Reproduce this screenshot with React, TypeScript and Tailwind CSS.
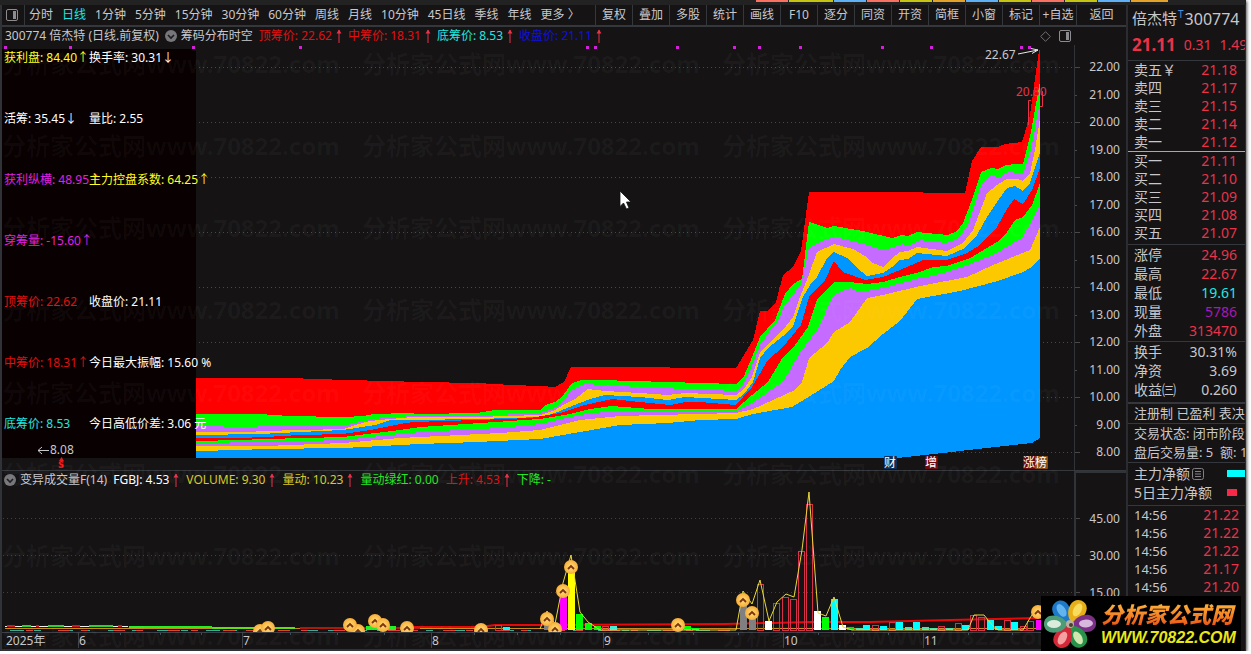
import { Fragment } from 'react';

const PERIODS = ['分时', '日线', '1分钟', '5分钟', '15分钟', '30分钟', '60分钟', '周线', '月线', '10分钟', '45日线', '季线', '年线', '更多 〉'];
const TOOLS = ['复权', '叠加', '多股', '统计', '画线', 'F10', '逐分', '同资', '开资', '简框', '小窗', '标记', '+自选'];

const TABS = [
  'w-[33px] bg-[#f87163]', 'w-[45px] bg-[#c6c412]', 'w-[33px] bg-[#5fb0f5]', 'w-[33px] bg-[#f87163]',
  'w-[33px] bg-[#c6c412]', 'w-[33px] bg-[#e3a32a]', 'w-[33px] bg-[#5fb0f5]', 'w-[33px] bg-[#c6c412]',
  'w-[33px] bg-[#f87163]', 'w-[33px] bg-[#c6c412]', 'w-[33px] bg-[#5fb0f5]', 'w-[38px] bg-[#e3a32a]',
];

const BASE = '1040,438 1032,443 960,451 897,458 196,458';

// upper edge of every cost band, painted from the top one down
const BANDS = [
  { color: '#ff0000', top: '196,378 289,378 346,380 387,381 420,382 477,383 511,385 540,386 555,387 564,382 571,367 650,367 690,368 736,368 753,340 760,311 767,311 776,302 783,275 793,267 801,251 809,192 880,192 965,193 972,161 981,147 998,147 1005,144 1022,142 1030,115 1039,50 1040,50' },
  { color: '#00ff00', top: '196,414 260,414 289,416 343,417 364,416 373,414 408,413 420,414 477,413 495,410 540,410 545,405 555,402 562,397 572,383 582,380 600,380 736,384 743,378 750,362 760,337 775,320 785,294 793,284 802,279 809,222 827,228 834,226 863,231 892,238 902,235 908,236 917,232 948,235 957,231 963,223 973,197 981,172 991,168 998,169 1006,165 1015,164 1023,164 1031,132 1040,81' },
  { color: '#c56bff', top: '196,426 250,427 267,426 343,426 373,419 413,416 477,416 540,413 555,408 563,401 572,390 585,384 600,385 660,388 736,391 743,385 750,370 760,345 767,335 777,322 785,305 793,295 801,284 804,270 809,248 825,240 835,237 860,243 883,250 892,248 902,244 910,246 920,240 945,243 958,239 968,225 976,200 983,182 991,176 1000,177 1008,172 1020,173 1023,174 1031,150 1040,101' },
  { color: '#fcc800', top: '196,432 250,432 262,431 343,429 355,425 370,421 390,419 413,417 477,417 540,415 553,411 565,404 575,399 588,389 605,391 640,393 668,395 685,393 736,395 744,389 752,377 760,352 783,330 793,317 800,297 808,277 817,252 834,244 853,249 865,256 873,263 883,267 892,258 900,252 908,251 917,247 947,251 963,243 973,230 987,193 997,185 1007,179 1017,179 1023,181 1030,173 1035,150 1040,118' },
  { color: '#0096ff', top: '196,435 260,434 300,432 343,430 375,425 390,420 420,420 520,418 545,416 555,413 572,406 590,399 605,395 640,397 668,400 685,397 736,400 744,394 753,382 760,358 768,348 783,336 793,326 803,297 810,285 817,277 827,258 834,252 847,258 857,268 867,276 883,273 892,267 900,260 908,259 917,253 947,256 965,248 977,235 987,217 997,202 1007,188 1015,186 1023,191 1030,183 1036,165 1040,152' },
  { color: '#ff0000', top: '196,438 240,438 265,437 300,435 343,434 370,430 400,424 413,422 477,420 530,418 560,413 585,405 612,399 640,402 670,405 685,402 700,402 736,405 743,397 752,387 762,370 768,360 783,347 801,325 809,297 825,280 834,261 843,272 865,280 883,277 900,270 923,260 947,260 967,253 977,247 997,227 1007,209 1014,199 1023,204 1032,190 1040,168' },
  { color: '#00ff00', top: '196,441 240,440 265,439 343,437 400,430 420,427 480,423 540,419 570,414 590,409 612,406 650,409 736,409 752,395 768,382 783,357 793,348 808,327 817,300 834,282 850,282 867,284 883,282 900,277 920,272 933,267 947,266 970,258 997,242 1007,232 1015,220 1023,217 1032,205 1040,183' },
  { color: '#c56bff', top: '196,443 265,442 343,440 400,434 420,432 500,428 540,424 580,415 612,411 736,411 752,403 783,382 800,353 817,330 834,295 850,288 860,292 883,288 920,278 933,276 960,268 993,255 1007,247 1023,237 1032,220 1040,204' },
  { color: '#fcc800', top: '196,446 265,446 343,443 400,438 420,437 500,433 540,430 580,420 620,416 736,413 753,409 795,390 802,382 809,358 827,343 834,332 850,322 867,298 883,295 920,286 967,277 993,265 1030,250 1040,227' },
  { color: '#0096ff', top: '196,451 240,450 265,449 343,448 420,444 477,442 540,439 580,432 620,425 668,423 700,420 736,419 753,414 792,407 810,396 834,381 840,370 850,357 867,348 883,334 900,321 917,299 960,291 998,281 1023,272 1030,268 1040,258' },
];

const PRICE_AXIS = ['22.00', '21.00', '20.00', '19.00', '18.00', '17.00', '16.00', '15.00', '14.00', '13.00', '12.00', '11.00', '10.00', '9.00', '8.00'];
const SIGNALS = [5, 70, 193, 300, 587, 595, 677, 734, 759, 800, 882, 931, 1021, 1029];

// x, top, fill ("" = hollow red candle)
const VOLUMES: [number, number, string][] = [
  [495, 625, ''], [503, 627, '#00ffff'], [544, 622, '#808080'], [560, 596, '#ff00ff'], [568, 572, '#ffff00'],
  [576, 614, '#00ff00'], [585, 623, '#00ff00'], [594, 626, '#00ff00'], [602, 626, ''], [610, 626, '#40f0d0'],
  [684, 626, '#00ff00'], [692, 628, '#00ff00'], [740, 604, '#808080'], [749, 619, '#808080'], [757, 584, ''],
  [765, 621, '#ffffff'], [773, 603, ''], [782, 597, ''], [790, 599, ''], [798, 551, ''], [806, 504, ''],
  [814, 611, '#ffffff'], [822, 617, '#00ff00'], [831, 599, '#00ffff'], [839, 625, '#ffffff'], [847, 627, '#00e000'],
  [856, 628, '#50e0a0'], [863, 625, '#00ffff'], [872, 625, ''], [880, 626, '#00ffff'], [889, 622, ''],
  [896, 622, '#00ffff'], [905, 627, '#50e0a0'], [913, 622, '#00ffff'], [922, 627, '#50e0a0'], [930, 628, '#50e0a0'],
  [938, 626, ''], [946, 628, '#50e0a0'], [955, 623, ''], [962, 625, '#00ffff'], [970, 615, ''], [978, 617, ''],
  [987, 620, '#00ffff'], [995, 626, '#00ffff'], [1004, 620, ''], [1011, 622, '#00ffff'], [1020, 626, ''],
  [1027, 621, ''], [1036, 620, '#ff00ff'],
];

const COINS = [
  [260, 631], [268, 628], [358, 631], [350, 625], [375, 621], [383, 625], [407, 628], [481, 630], [555, 629],
  [547, 619], [563, 591], [571, 567], [678, 625], [743, 600], [752, 613], [1038, 612],
];

const MONTHS: [number, string][] = [[78, '6'], [242, '7'], [431, '8'], [603, '9'], [783, '10'], [923, '11']];
const DAY_TICKS = [120, 160, 201, 290, 337, 384, 474, 517, 560, 648, 693, 738, 818, 853, 888, 968, 1012];

// left, right, row of the statistics lying over the chart
const STATS = [
  ['获利盘: 84.40↑', 'text-[#ffff20]', '换手率: 30.31↓', 'text-white'],
  ['活筹: 35.45↓', 'text-white', '量比: 2.55', 'text-white'],
  ['获利纵横: 48.95↑', 'text-[#e020e0]', '主力控盘系数: 64.25↑', 'text-[#ffff20]'],
  ['穿筹量: -15.60↑', 'text-[#e020e0]', '', ''],
  ['顶筹价: 22.62', 'text-[#e01010]', '收盘价: 21.11', 'text-white'],
  ['中筹价: 18.31↑', 'text-[#e01010]', '今日最大振幅: 15.60 %', 'text-white'],
  ['底筹价: 8.53', 'text-[#20e8e0]', '今日高低价差: 3.06 元', 'text-white'],
];

const ASKS = [['卖五￥', '21.18'], ['卖四', '21.17'], ['卖三', '21.15'], ['卖二', '21.14'], ['卖一', '21.12']];
const BIDS = [['买一', '21.11'], ['买二', '21.10'], ['买三', '21.09'], ['买四', '21.08'], ['买五', '21.07']];
const LIMITS = [
  ['涨停', '24.96', 'text-[#e8334a]'],
  ['最高', '22.67', 'text-[#e8334a]'],
  ['最低', '19.61', 'text-[#20e8e0]'],
  ['现量', '5786', 'text-[#a818b8]'],
  ['外盘', '313470', 'text-[#e8334a]'],
];
const RATIOS = [['换手', '30.31%'], ['净资', '3.69'], ['收益㈢', '0.260']];
const TRADES = ['21.22', '21.22', '21.22', '21.17', '21.20'];

const UpArrow = () => (
  <svg width="6" height="16" viewBox="0 0 6 16" className="shrink-0" fill="none" stroke="#e8334a">
    <path d="M3 15V2" />
    <path d="M0.5 5.5L3 1.5L5.5 5.5Z" fill="#e8334a" stroke="none" />
  </svg>
);

const Toggle = () => (
  <svg width="12" height="12" viewBox="0 0 12 12" className="shrink-0">
    <circle cx="6" cy="6" r="6" fill="#77777b" />
    <path d="M3 5L6 8L9 5" fill="none" stroke="#1c1c1e" strokeWidth="1.6" />
  </svg>
);

const PaneIcon = () => (
  <svg width="12" height="12" viewBox="0 0 12 12" className="shrink-0">
    <rect x="0.5" y="0.5" width="11" height="11" rx="1.5" fill="none" stroke="#8c8c90" />
    <rect x="7" y="2" width="3" height="8" fill="#8c8c90" />
  </svg>
);

const Indicator = ({ label, color, arrow = true }: { label: string; color: string; arrow?: boolean }) => (
  <span className={`flex items-center gap-1 ${color}`}>
    {label}
    {arrow && <UpArrow />}
  </span>
);

const CostChart = () => (
  <svg viewBox="2 45 1124 426" className="block w-full" fontSize="12">
    <rect x="2" y="49" width="194" height="409" fill="#080001" />
    {PRICE_AXIS.map((p, i) => {
      const y = 67 + i * 27.5;
      return (
        <Fragment key={p}>
          {i % 2 === 0 && <path d={`M199 ${Math.round(y) + 0.5}H1074`} stroke="#48484c" strokeDasharray="1 3" />}
          <path d={`M1074 ${Math.round(y) + 0.5}h${i % 2 === 0 ? 6 : 3}`} stroke="#48484c" />
          <text x="1120" y={Math.round(y) + 4} textAnchor="end" fill="#c8c8cc">{p}</text>
        </Fragment>
      );
    })}
    <path d="M1074.5 45V471" stroke="#303338" strokeWidth="1" />
    <path d="M2 470.5H1126" stroke="#34373c" />

    <g shapeRendering="crispEdges">
      {BANDS.map((b, i) => <polygon key={i} points={`${b.top} ${BASE}`} fill={b.color} />)}
      {SIGNALS.map((x) => <rect key={x} x={x - 1} y="46" width="3" height="3" fill="#d420d8" />)}
    </g>

    <path d="M1028.500 125V100.500H1031M1040 106.500H1042.500V91" fill="none" stroke="#e8334a" />
    <text x="1016" y="96" fill="#e8334a">20.80</text>
    <text x="985" y="59" fill="#c8c8cc">22.67</text>
    <path d="M1018 54L1038 50M1031 48.500L1038 50L1032 53.500" fill="none" stroke="#e8e8e8" />

    <text x="50" y="454" fill="#c8c8cc">8.08</text>
    <path d="M49 450.500H38M42 447L38 450.500L42 454" fill="none" stroke="#c8c8cc" />
    <path d="M61.500 457L64 461H59Z" fill="#f01818" />
    <text x="58" y="468" fill="#f01818" fontWeight="bold">s</text>

    {[[884, '财', '#0b2f5c'], [925, '增', '#6d0a10'], [1023, '涨', '#6d0a10'], [1035, '榜', '#8a4d12']].map(([x, t, c]) => (
      <g key={t}>
        <rect x={x} y="456" width="13" height="13" rx="1" fill={c as string} />
        <text x={x} y="467" fill="#fff">{t}</text>
      </g>
    ))}

    <path d="M620 191V206.500L623.500 203L626.500 209L629 208L626.500 202H631Z" fill="#fff" stroke="#111" strokeWidth="0.800" />
  </svg>
);

const VolumeChart = () => (
  <svg viewBox="2 488 1124 161" className="block w-full" fontSize="12">
    <defs>
      <radialGradient id="coin">
        <stop offset="0" stopColor="#ffe07c" />
        <stop offset="1" stopColor="#f7ad38" />
      </radialGradient>
      <clipPath id="plot"><rect x="2" y="488" width="1072" height="144" /></clipPath>
    </defs>
    {[[518, '45.00'], [555, '30.00'], [592, '15.00']].map(([y, t]) => (
      <Fragment key={t}>
        <path d={`M3 ${+y + 0.5}H1074`} stroke="#404044" strokeDasharray="1 3" />
        <path d={`M1074 ${+y + 0.5}h6`} stroke="#48484c" />
        <text x="1120" y={+y + 5} textAnchor="end" fill="#c8c8cc">{t}</text>
      </Fragment>
    ))}
    <path d="M1075 488V649" stroke="#303338" strokeWidth="2" />

    <g clipPath="url(#plot)">
      <g fill="none" shapeRendering="crispEdges">
        <path d="M5 628.500H1036" stroke="#c88a20" />
        <path d="M10 630.500H736" stroke="#30b0a0" strokeDasharray="14 10 7 18" />
        <path d="M26 630.500H736" stroke="#e04040" strokeDasharray="7 25 12 11" />
        <path d="M5 626.500H128" stroke="#f0f0f0" />
        <path d="M7 626H15M36 626H39M72 626H80M118 626H122" stroke="#d01818" strokeWidth="2" />
        <path d="M22 626H31M48 626H64M89 626H113" stroke="#30d030" strokeWidth="2" />
        <path d="M129 627H212" stroke="#20f020" strokeWidth="2" />
        <path d="M212 628H295" stroke="#60e010" strokeWidth="2" />
        <path d="M300 627.500H420" stroke="#b01808" strokeWidth="2" />
        <path d="M366 628H396" stroke="#20f020" strokeWidth="4" />
      </g>
      <path d="M412 627H480L495 625H545L725 624L810 622H870L950 620L1038 618" fill="none" stroke="#e80808" strokeWidth="2" />
      {VOLUMES.map(([x, y, fill]) =>
        fill ? (
          <rect key={x} x={x} y={y} width="7" height={630 - y} fill={fill} />
        ) : (
          <rect key={x} x={x + 0.5} y={y + 0.5} width="6" height={630 - y} fill="none" stroke="#d83048" />
        )
      )}
      <path
        d="M540 629L547 611L555 624L563 583L571 555L580 612L588 622L600 630H736L743 591L752 604L760 580L769 621L777 602L786 594L794 597L802 550L809 492L818 613L826 616L834 597L843 627L852 630H968L974 615H984L992 625L998 630H1023L1030 618L1038 606"
        fill="none"
        stroke="#e8d83c"
      />
      {COINS.map(([x, y]) => (
        <g key={x}>
          <circle cx={x} cy={y} r="7" fill="url(#coin)" />
          <path d={`M${x - 3} ${y + 2}l3 -3l3 3`} fill="none" stroke="#7a3410" strokeWidth="1.800" />
        </g>
      ))}
    </g>

    <path d="M2 632.500H1074" stroke="#3c4046" />
    {DAY_TICKS.map((x) => <path key={x} d={`M${x + 0.5} 633v2`} stroke="#3c5060" />)}
    <text x="6" y="645" fill="#c8c8cc">2025年</text>
    {MONTHS.map(([x, m]) => (
      <Fragment key={m}>
        <path d={`M${x + 0.5} 633V648`} stroke="#3c4046" />
        <text x={x + 1} y="645" fill="#c8c8cc">{m}</text>
      </Fragment>
    ))}
  </svg>
);

const Watermark = () => (
  <svg viewBox="2 27 1124 622" className="pointer-events-none absolute inset-x-0 top-0 w-full" fontSize="24" fontWeight="bold" fill="#ffffff" fillOpacity="0.035">
    {[73, 155, 237, 319, 402, 483, 565, 645].map((y) =>
      [2, 362, 722].map((x) => <text key={`${x}-${y}`} x={x} y={y}>分析家公式网www.70822.com</text>)
    )}
  </svg>
);

const Flower = () => (
  <svg width="54" height="54" viewBox="-27 -27 54 54" className="shrink-0">
    {[
      [-32, '#1d78c8', '#62b4ee'], [28, '#e8b018', '#f8dc60'], [88, '#7c2f86', '#d8b8dc'],
      [150, '#28924a', '#d0e8b0'], [208, '#d42838', '#f4a0a0'], [270, '#4c9c78', '#dcecdc'],
    ].map(([angle, edge, core]) => (
      <g key={angle} transform={`rotate(${angle})`}>
        <path d="M0 -2C-12 -9 -11 -25 -1 -26C11 -27 12 -10 0 -2Z" fill={edge as string} />
        <ellipse cx="0" cy="-16" rx="4" ry="7" fill={core as string} />
      </g>
    ))}
    <circle r="4" fill="#b8b0a0" />
    <circle cx="1" cy="1" r="2" fill="#4a3c30" />
  </svg>
);

const Quotes = ({ rows }: { rows: string[][] }) => (
  <table className="w-full leading-[18px]">
    <tbody>
      {rows.map(([name, price]) => (
        <tr key={name}>
          <th scope="row" className="p-0 text-left font-normal">{name}</th>
          <td className="p-0 text-right text-[#e8334a]">{price}</td>
        </tr>
      ))}
    </tbody>
  </table>
);

const SidePanel = () => (
  <aside className="w-[120px] shrink-0 overflow-hidden whitespace-nowrap border-l-2 border-r border-[#2a2c31] text-sm text-[#c8c8cc]">
    <div className="flex h-14 flex-col border-b border-[#34373c] pl-1">
      <h1 className="flex h-7 items-center text-[15px]">
        倍杰特<sup className="mx-px text-[10px] text-[#4a90e0]">T</sup>
        <span className="text-base">300774</span>
      </h1>
      <p className="flex h-6 items-center gap-2 text-[#e8334a]">
        <strong className="text-[17px]">21.11</strong>
        <span>0.31</span>
        <span>1.49%</span>
      </p>
    </div>
    <div className="border-b border-[#e0a040] pl-1.5 pr-2"><Quotes rows={ASKS} /></div>
    <div className="border-b border-[#34373c] pb-0.5 pl-1.5 pr-2"><Quotes rows={BIDS} /></div>
    <div className="border-b border-[#34373c] pb-px pl-1.5 pr-2">
      <table className="w-full leading-[19px]">
        <tbody>
          {LIMITS.map(([name, value, color]) => (
            <tr key={name}>
              <th scope="row" className="p-0 text-left font-normal">{name}</th>
              <td className={`p-0 text-right ${color}`}>{value}</td>
            </tr>
          ))}
        </tbody>
      </table>
    </div>
    <div className="border-b-2 border-[#34373c] pb-[3px] pl-1.5 pr-2">
      <table className="w-full leading-[19px]">
        <tbody>
          {RATIOS.map(([name, value]) => (
            <tr key={name}>
              <th scope="row" className="p-0 text-left font-normal">{name}</th>
              <td className="p-0 text-right">{value}</td>
            </tr>
          ))}
        </tbody>
      </table>
    </div>
    <div className="text-[13px] leading-[19px]">
      <p className="border-b border-[#34373c] pl-1.5">注册制 已盈利 表决权</p>
      <p className="pl-1.5">交易状态: 闭市阶段</p>
      <p className="border-b border-[#34373c] pl-1.5">盘后交易量: 5 &nbsp;额: 1万</p>
    </div>
    <div className="border-b border-[#34373c] pb-[3px] pl-1.5 pt-px leading-[19px]">
      <p className="flex items-center">
        主力净额
        <svg width="13" height="12" viewBox="0 0 13 12" className="ml-0.5" fill="none" stroke="#808084">
          <rect x="0.5" y="0.5" width="11" height="11" rx="2" />
          <path d="M3 3.500H9M3 6H9M3 8.500H9" />
        </svg>
        <span className="ml-auto h-[7px] w-[18px] bg-[#00ffff]"></span>
      </p>
      <p className="flex items-center">
        5日主力净额
        <span className="ml-auto mr-2 h-[7px] w-[10px] bg-[#f82848]"></span>
      </p>
    </div>
    <table className="w-full leading-[18px]">
      <tbody>
        {TRADES.map((price, i) => (
          <tr key={i}>
            <td className="py-0 pl-1.5 pr-0 text-[13px]">14:56</td>
            <td className="py-0 pl-0 pr-1.5 text-right text-[#e8334a]">{price}</td>
          </tr>
        ))}
      </tbody>
    </table>
  </aside>
);

export default function App() {
  return (
    <div className="bg-white pr-[5px] font-['Noto_Sans','Noto_Sans_CJK_SC',sans-serif] text-xs text-[#c8c8cc]">
      <main className="relative bg-[#151314] shadow-[1px_1px_3px_#555]">
        <div className="flex h-[5px] items-start justify-end bg-[#222222] pr-[77px]">
          {TABS.map((tab, i) => <span key={i} className={`h-0.5 border-r border-[#222222] ${tab}`}></span>)}
        </div>

        <div className="flex">
          <div className="min-w-0 flex-1 border-b-2 border-l-2 border-[#2f3236]">
            <nav className="flex h-[22px] items-stretch overflow-hidden whitespace-nowrap border-b-2 border-[#34373c]">
              <button aria-label="侧栏" className="flex w-[23px] shrink-0 items-center border-r border-[#34373c] pl-1"><PaneIcon /></button>
              <div className="flex flex-1 items-center gap-[9px] pl-1">
                {PERIODS.map((p) => (
                  <button key={p} className={p === '日线' ? 'text-[#20e8e0]' : ''}>{p}</button>
                ))}
              </div>
              {TOOLS.map((t) => (
                <button key={t} className="w-[37px] shrink-0 border-l border-[#34373c]">{t}</button>
              ))}
              <button className="w-[50px] shrink-0 border-l border-[#34373c]">返回</button>
            </nav>

            <div className="relative">
              <div className="flex h-[18px] items-center whitespace-nowrap pl-[3px]">
                <span>300774 倍杰特 (日线.前复权)</span>
                <button aria-label="切换指标" className="ml-1.5 mr-1"><Toggle /></button>
                <span className="mr-1.5">筹码分布时空</span>
                <div className="flex gap-1.5">
                  <Indicator label="顶筹价: 22.62" color="text-[#e01010]" />
                  <Indicator label="中筹价: 18.31" color="text-[#e01010]" />
                  <Indicator label="底筹价: 8.53" color="text-[#20e8e0]" />
                  <Indicator label="收盘价: 21.11" color="text-[#1010e0]" />
                </div>
                <div className="ml-auto mr-[55px] flex items-center gap-2">
                  <svg width="11" height="11" viewBox="0 0 11 11" fill="none" stroke="#707074">
                    <path d="M5.500 0.700L10.300 5.500L5.500 10.300L0.700 5.500Z" />
                  </svg>
                  <PaneIcon />
                </div>
              </div>

              <div className="relative">
                <CostChart />
                <dl className="absolute left-0.5 top-[5px] grid auto-rows-[61px] grid-cols-[85px_auto] whitespace-nowrap leading-4">
                  {STATS.map(([left, leftColor, right, rightColor]) => (
                    <Fragment key={left}>
                      <dt className={leftColor}>{left}</dt>
                      <dd className={rightColor}>{right}</dd>
                    </Fragment>
                  ))}
                </dl>
              </div>

              <div className="flex h-[17px] items-center whitespace-nowrap pl-0.5">
                <button aria-label="切换指标" className="mr-1"><Toggle /></button>
                <span className="mr-1.5">变异成交量F(14)</span>
                <div className="flex gap-[7px]">
                  <Indicator label="FGBJ: 4.53" color="text-white" />
                  <Indicator label="VOLUME: 9.30" color="text-[#d8c828]" />
                  <Indicator label="量动: 10.23" color="text-[#d8c828]" />
                  <Indicator label="量动绿红: 0.00" color="text-[#20e820]" arrow={false} />
                  <Indicator label="上升: 4.53" color="text-[#e01010]" />
                  <Indicator label="下降: -" color="text-[#20e820]" arrow={false} />
                </div>
                <span className="ml-auto h-full w-[52px] border-l-2 border-t-2 border-[#303338]"></span>
              </div>

              <VolumeChart />
              <Watermark />
            </div>
          </div>

          <SidePanel />
        </div>

        <a href="#" className="absolute bottom-0 right-[5px] flex h-[55px] w-[200px] items-center gap-1 whitespace-nowrap bg-black pl-0.5">
          <Flower />
          <span className="flex flex-col">
            <span className="bg-gradient-to-b from-[#ffc040] to-[#e84a10] bg-clip-text text-[22px] font-black italic leading-7 text-transparent">分析家公式网</span>
            <span className="font-['Liberation_Sans',sans-serif] text-base font-bold italic leading-5 text-[#e8e818]">WWW.70822.COM</span>
          </span>
        </a>
      </main>
    </div>
  );
}
